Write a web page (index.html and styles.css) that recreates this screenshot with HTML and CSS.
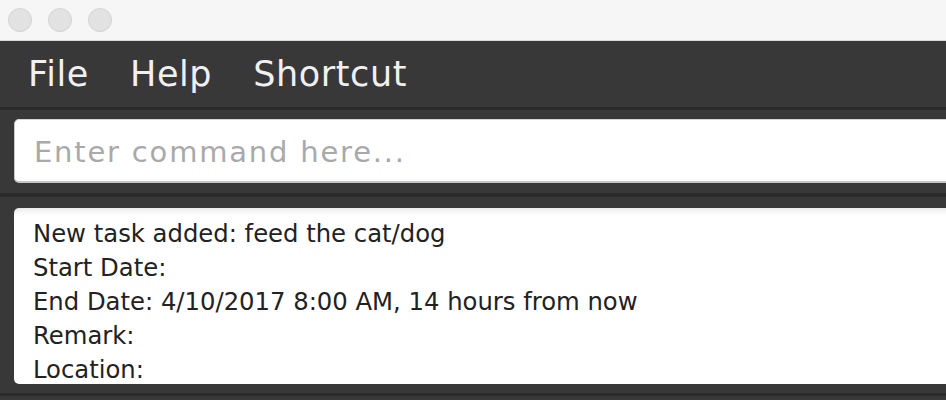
FILE: index.html
```html
<!DOCTYPE html>
<html>
<head>
<meta charset="utf-8">
<link rel="stylesheet" href="styles.css">
</head>
<body>
<div class="window">
  <div class="titlebar">
    <span class="light"></span>
    <span class="light"></span>
    <span class="light"></span>
  </div>
  <div class="menubar">
    <span class="menu-item">File</span>
    <span class="menu-item">Help</span>
    <span class="menu-item">Shortcut</span>
  </div>
  <div class="command-pane">
    <input class="command-input" type="text" placeholder="Enter command here...">
  </div>
  <div class="result-pane">
    <div class="result-box">
      <div class="result-line">New task added: feed the cat/dog</div>
      <div class="result-line">Start Date:</div>
      <div class="result-line">End Date: 4/10/2017 8:00 AM, 14 hours from now</div>
      <div class="result-line">Remark:</div>
      <div class="result-line">Location:</div>
    </div>
  </div>
</div>
</body>
</html>
```
FILE: styles.css
```css
html, body {
  margin: 0;
  padding: 0;
  background: #383838;
  overflow: hidden;
  font-family: "DejaVu Sans", "Liberation Sans", sans-serif;
}

.window {
  width: 946px;
  height: 400px;
  overflow: hidden;
  background: #383838;
}

.titlebar {
  height: 40px;
  background: #f6f6f6;
  border-bottom: 1px solid #d9d9d9;
  display: flex;
  align-items: center;
  gap: 16px;
  padding-left: 8px;
}

.light {
  width: 22px;
  height: 22px;
  border-radius: 50%;
  background: #e2e2e2;
  border: 1px solid #d3d3d3;
}

.menubar {
  height: 66px;
  background: #383838;
  border-bottom: 3px solid #2b2b2b;
  display: flex;
  align-items: center;
  gap: 41px;
  padding-left: 28px;
}

.menu-item {
  color: #f0f0f0;
  font-size: 35px;
  letter-spacing: 0.6px;
}

.command-pane {
  padding: 9px 0 10px 14px;
  border-bottom: 4px solid #2b2b2b;
  display: flex;
}

.command-input {
  flex: 1;
  margin-right: -20px;
  height: 64px;
  box-sizing: border-box;
  border: 1px solid #c8c8c8;
  border-top-color: #d4d4d4;
  border-bottom: 2px solid #c6c6c6;
  border-radius: 5px;
  background: #ffffff;
  padding: 2px 0 0 19px;
  font-family: "DejaVu Sans", "Liberation Sans", sans-serif;
  font-size: 29px;
  letter-spacing: 1.8px;
  color: #222;
  outline: none;
}

.command-input::placeholder {
  color: #a9a9a9;
}

.result-pane {
  padding: 11px 0 9px 14px;
  border-bottom: 3px solid #2b2b2b;
  display: flex;
}

.result-box {
  flex: 1;
  margin-right: -20px;
  height: 176px;
  box-sizing: border-box;
  overflow: hidden;
  background: #ffffff;
  border-radius: 5px;
  box-shadow: inset 0 6px 6px -4px rgba(0, 0, 0, 0.12);
  padding: 9px 0 0 19px;
  color: #222222;
  font-size: 24.3px;
  line-height: 34px;
}

.result-line {
  white-space: nowrap;
}
```
